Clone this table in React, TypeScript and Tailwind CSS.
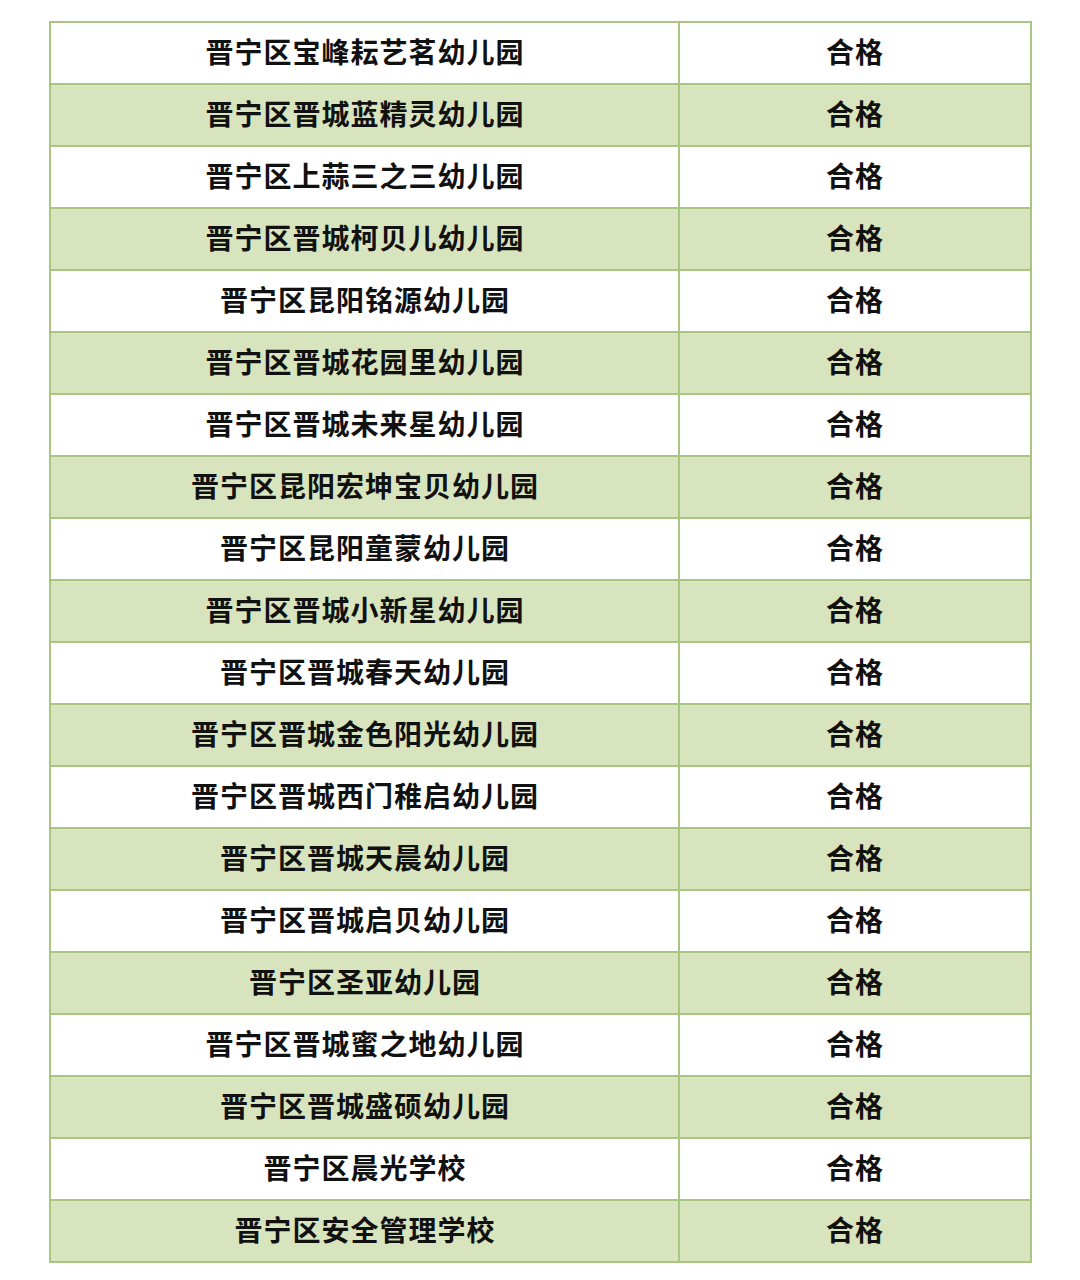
const rows = [
  "晋宁区宝峰耘艺茗幼儿园",
  "晋宁区晋城蓝精灵幼儿园",
  "晋宁区上蒜三之三幼儿园",
  "晋宁区晋城柯贝儿幼儿园",
  "晋宁区昆阳铭源幼儿园",
  "晋宁区晋城花园里幼儿园",
  "晋宁区晋城未来星幼儿园",
  "晋宁区昆阳宏坤宝贝幼儿园",
  "晋宁区昆阳童蒙幼儿园",
  "晋宁区晋城小新星幼儿园",
  "晋宁区晋城春天幼儿园",
  "晋宁区晋城金色阳光幼儿园",
  "晋宁区晋城西门稚启幼儿园",
  "晋宁区晋城天晨幼儿园",
  "晋宁区晋城启贝幼儿园",
  "晋宁区圣亚幼儿园",
  "晋宁区晋城蜜之地幼儿园",
  "晋宁区晋城盛硕幼儿园",
  "晋宁区晨光学校",
  "晋宁区安全管理学校",
];

export default function App() {
  return (
    <div className="w-[1080px] h-[1280px] bg-white pl-[49px] pt-[21px] font-['Noto_Sans_CJK_SC',sans-serif]">
      <table className="w-[981px] border-collapse border-2 border-[#aac581] table-fixed">
        <colgroup>
          <col className="w-[629px]" />
          <col className="w-[352px]" />
        </colgroup>
        <tbody>
          {rows.map((name, i) => (
            <tr key={name} className={i % 2 === 1 ? "bg-[#d7e4bd]" : "bg-white"}>
              <td className="h-[62px] border-2 border-[#aac581] p-0 pb-[5px] pl-[1px] text-center align-middle text-[28px] font-bold leading-none tracking-[1px] text-[#111]">
                {name}
              </td>
              <td className="h-[62px] border-2 border-[#aac581] p-0 pb-[5px] text-center align-middle text-[28px] font-bold leading-none tracking-[1px] text-[#111]">
                合格
              </td>
            </tr>
          ))}
        </tbody>
      </table>
    </div>
  );
}
